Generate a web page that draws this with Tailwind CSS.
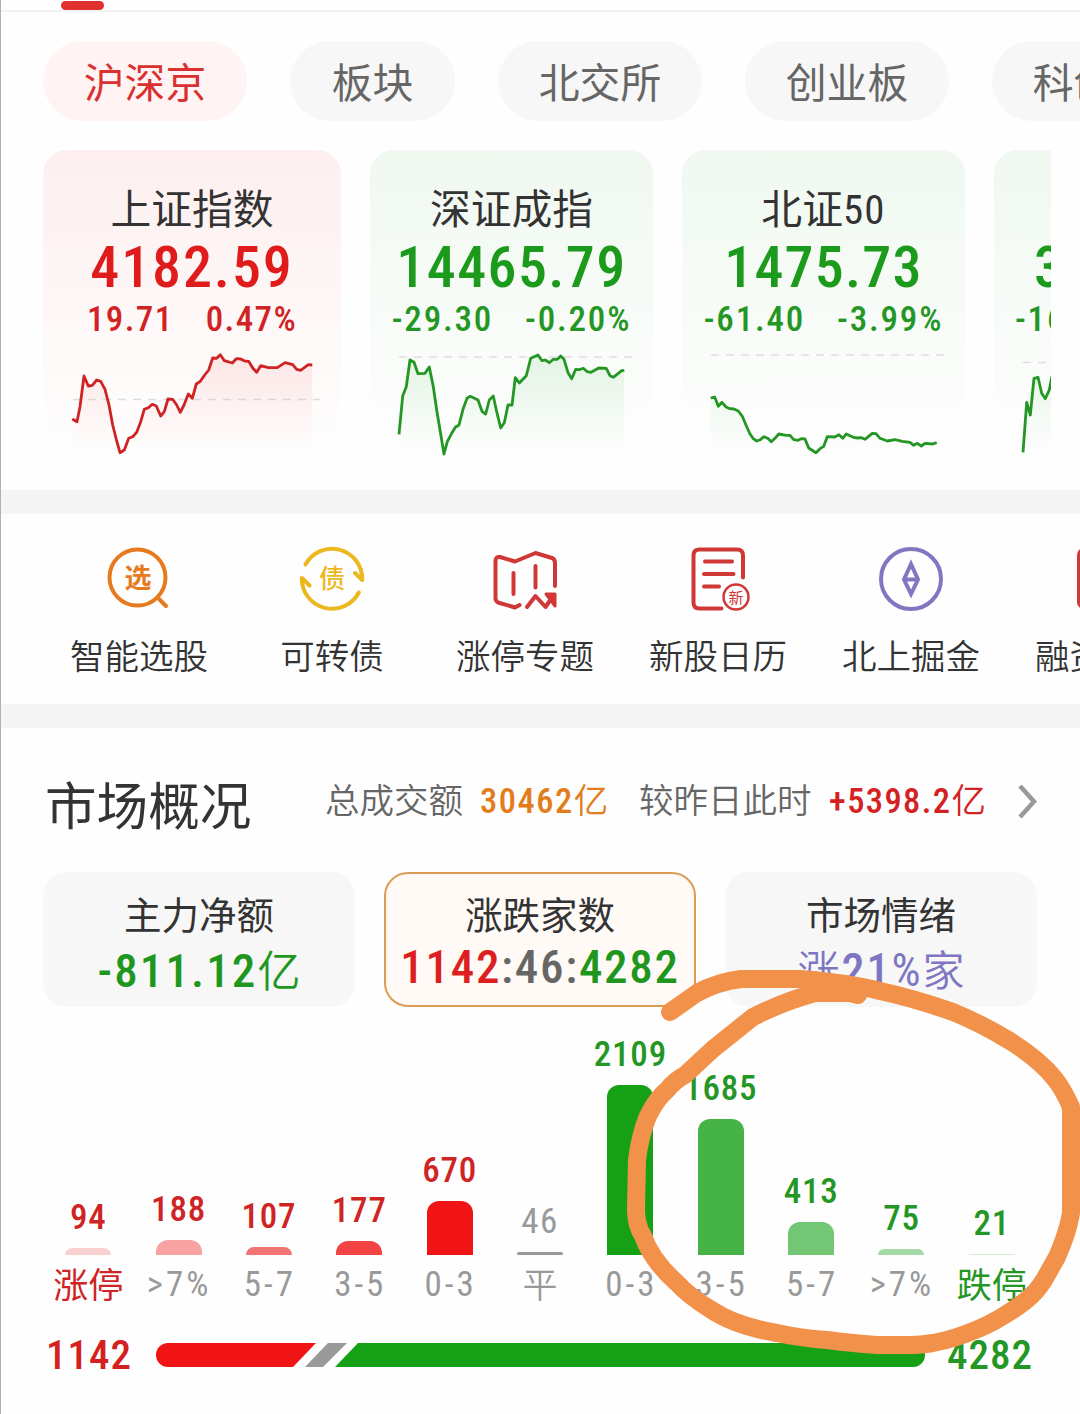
<!DOCTYPE html>
<html lang="zh-CN">
  <head>
    <meta charset="UTF-8" />
    <meta name="viewport" content="width=device-width, initial-scale=1.0" />
    <script src="https://cdn.jsdelivr.net/npm/@tailwindcss/browser@4"></script>
    <title>沪深京行情</title>
  </head>
  <body class="bg-white">
    <div class="relative w-[1080px] h-[1414px] overflow-hidden bg-[#fefefe] font-['Roboto','Noto_Sans_CJK_SC',sans-serif] font-stretch-semi-condensed text-[#333]">
      <!-- Tabs -->
      <div class="h-3 border-b-2 border-[#f2f2f2] pl-[61px] pt-px">
        <div class="w-[43px] h-[9px] rounded-full bg-[#e03131]"></div>
      </div>

      <!-- Market filter -->
      <div class="flex gap-[43px] pl-[43px] pt-[29px] text-[40.8px] leading-[87px] text-[#666] whitespace-nowrap">
        <div class="shrink-0 w-[204px] h-20 rounded-full bg-[#fff4f3] text-center text-[#d93030]">沪深京</div>
        <div class="shrink-0 w-[165px] h-20 rounded-full bg-[#f7f7f7] text-center">板块</div>
        <div class="shrink-0 w-[204px] h-20 rounded-full bg-[#f7f7f7] text-center">北交所</div>
        <div class="shrink-0 w-[204px] h-20 rounded-full bg-[#f7f7f7] text-center">创业板</div>
        <div class="shrink-0 w-[204px] h-20 rounded-full bg-[#f7f7f7] text-center">科创板</div>
      </div>

      <!-- Index cards -->
      <div class="flex gap-[29px] ml-[43px] mt-[29px] w-[1008px] h-[310px] overflow-hidden whitespace-nowrap text-center font-medium">
        <div class="shrink-0 w-[298px]">
          <div class="h-[305px] rounded-t-3xl bg-linear-to-b from-[#fdefef] to-[#fefefe] pt-9">
            <div class="text-[40.8px] leading-[48px] font-normal">上证指数</div>
            <div class="-mt-0.5 text-[58px] leading-[70px] tracking-[1.9px] text-[#e01b1b]">4182.59</div>
            <div class="flex justify-center gap-8 text-[35px] leading-9 tracking-[1.4px] text-[#d02424]"><span>19.71</span><span>0.47%</span></div>
            <svg class="mt-[7px] w-full h-[115px]" viewBox="43 345 298 115" fill="none">
              <defs>
                <linearGradient id="redFill" x1="0" y1="354" x2="0" y2="452" gradientUnits="userSpaceOnUse">
                  <stop stop-color="#f23030" stop-opacity=".1" />
                  <stop offset="1" stop-color="#f23030" stop-opacity="0" />
                </linearGradient>
                <linearGradient id="greenFill" x1="0" y1="354" x2="0" y2="452" gradientUnits="userSpaceOnUse">
                  <stop stop-color="#18a018" stop-opacity=".1" />
                  <stop offset="1" stop-color="#18a018" stop-opacity="0" />
                </linearGradient>
              </defs>
              <path d="M73 399.5H320" stroke="#ddd" stroke-width="1.5" stroke-dasharray="8 7" />
              <path fill="url(#redFill)" d="M72.3 419L77 421.7L80 406.7L84 376L88.3 386L96.7 380L105 389.3L109 405L116.7 441L120 452.7L128.7 438.3L136.7 432.3L144.3 409.3L152.3 404.3L160.7 416L168 399L172.7 399.3L180.3 412.3L188.3 394L192.3 398.3L196.3 384L208.7 370L212.7 358L220.3 354.7L232.3 363L236.3 358.7L248.7 361.3L256.7 372.3L260.7 365.7L277.3 367.7L285 362.7L300.7 370.3L312.3 365V452H72.3Z" />
              <path stroke="#cf2323" stroke-width="2.8" stroke-linejoin="round" d="M72.3 419L77 421.7L80 406.7L84 376L88.3 386L92.3 385.3L96.7 380L100.7 381.3L105 389.3L109 405L112.7 425L116.7 441L120 452.7L124.3 450L128.7 438.3L132.7 436.7L136.7 432.3L140.7 421.7L144.3 409.3L148.3 407.7L152.3 404.3L156.3 406L160.7 416L164.3 411.7L168 399L172.7 399.3L176.7 405L180.3 412.3L184 405L188.3 394L192.3 398.3L196.3 384L200.3 381.3L204.7 375L208.7 370L212.7 358L216.7 358.3L220.3 354.7L224.3 360.7L232.3 363L236.3 358.7L240.7 359L244.7 361L248.7 361.3L252.7 368L256.7 372.3L260.7 365.7L268.3 367.7L277.3 367.7L285 362.7L292.7 364.7L296.7 369.3L300.7 370.3L308.3 364.7L312.3 365" />
            </svg>
          </div>
        </div>

        <div class="shrink-0 w-[283px]">
          <div class="h-[305px] rounded-t-3xl bg-linear-to-b from-[#f0f8f0] to-[#fefefe] pt-9">
            <div class="text-[40.8px] leading-[48px] font-normal">深证成指</div>
            <div class="-mt-0.5 text-[58px] leading-[70px] tracking-[1.4px] text-[#1c9a1c]">14465.79</div>
            <div class="flex justify-center gap-8 text-[35px] leading-9 tracking-[1.8px] text-[#239623]"><span>-29.30</span><span>-0.20%</span></div>
            <svg class="mt-[7px] w-full h-[115px]" viewBox="370 345 283 115" fill="none">
              <path d="M399 357H632" stroke="#ddd" stroke-width="1.5" stroke-dasharray="8 7" />
              <path fill="url(#greenFill)" d="M399 434.3L402.7 396L410 360L418 373.7L425 373.3L429.3 367L433.3 386.7L444 454L451.7 433.3L459 425L467 398.3L478 400L485.7 414L493.3 396L500.7 428L508 405L512 405L515.3 377.7L526.3 375.7L530.7 358.3L538 355L549.3 362.7L560.7 356L571.7 378.7L575.7 369.3L591 372.3L606.3 368.3L613.3 377.3L624.3 370.3V452H399Z" />
              <path stroke="#239623" stroke-width="2.8" stroke-linejoin="round" d="M399 434.3L402.7 396L406.3 386.7L410 360L414 362.3L418 373.7L425 373.3L429.3 367L433.3 386.7L436.7 410L440.3 431.7L444 454L447.3 441.7L451.7 433.3L455.3 427.3L459 425L463 409.3L467 398.3L470.3 396.3L478 400L482 411.3L485.7 414L489.3 400L493.3 396L496.7 411.7L500.7 428L504.3 422.7L508 405L512 405L515.3 377.7L519.3 383L526.3 375.7L530.7 358.3L538 355L542 360.7L545.3 360L549.3 362.7L553.3 359.3L557.3 359.3L560.7 356L564 359.3L568 372.7L571.7 378.7L575.7 369.3L579.3 369.7L583.3 368.3L587.3 371.7L591 372.3L598.7 368L606.3 368.3L610 375.7L613.3 377.3L621.7 370.7L624.3 370.3" />
            </svg>
          </div>
        </div>

        <div class="shrink-0 w-[283px]">
          <div class="h-[305px] rounded-t-3xl bg-linear-to-b from-[#f0f8f0] to-[#fefefe] pt-9">
            <div class="text-[40.8px] leading-[48px] font-normal">北证<span class="tracking-[1.2px]">50</span></div>
            <div class="-mt-0.5 text-[58px] leading-[70px] tracking-[1.2px] text-[#1c9a1c]">1475.73</div>
            <div class="flex justify-center gap-8 text-[35px] leading-9 tracking-[1.8px] text-[#239623]"><span>-61.40</span><span>-3.99%</span></div>
            <svg class="mt-[7px] w-full h-[115px]" viewBox="682 345 283 115" fill="none">
              <path d="M711 355H944" stroke="#ddd" stroke-width="1.5" stroke-dasharray="8 7" />
              <path fill="url(#greenFill)" d="M710.7 398L718.3 406.3L738.3 411L756.7 441L778.7 434L805 439L816 452L827.3 436.7L872.3 433.3L887.3 441L936.7 442.7V452H710.7Z" />
              <path stroke="#239623" stroke-width="2.8" stroke-linejoin="round" d="M710.7 398L714.7 397L718.3 406.3L722 402.3L726 407L730 408.7L734 409L738.3 411L742.3 416.3L746.3 425.7L750 434L753.3 438.7L756.7 441L760.3 439.7L764 436.7L767.7 438.3L771.3 441.7L775 438.3L778.7 434L786.3 435.3L790 435.3L793.7 439.7L798 440.3L801.3 438.7L805 439L808.7 448L816 452.7L820 448.7L823.7 446.3L827.3 436.7L834.7 437L839 434.7L842.7 438.3L846.3 434L853.3 437.3L857.7 438L861.3 437.7L865 439.3L872.3 433.3L876 433.7L880 438.3L887.3 441L895 439.7L902.3 441.3L910 442.3L913.7 445.3L917.3 443.3L921.3 446L925 443.3L932.7 444L936.7 442.7" />
            </svg>
          </div>
        </div>

        <div class="shrink-0 w-[283px] text-left">
          <div class="h-[305px] rounded-t-3xl bg-linear-to-b from-[#f0f8f0] to-[#fefefe] pt-[82px]">
            <div class="pl-10 text-[58px] leading-[70px] text-[#1c9a1c]">3</div>
            <div class="pl-[21px] text-[35px] leading-9 tracking-[1.8px] text-[#239623]">-16</div>
            <svg class="mt-[7px] w-full h-[115px]" viewBox="994 345 283 115" fill="none">
              <path d="M1023 362.5H1060" stroke="#ddd" stroke-width="1.5" stroke-dasharray="8 7" />
              <path fill="url(#greenFill)" d="M1023 452L1026.7 402L1034 378L1038 377L1045 398L1052 377V452Z" />
              <path stroke="#239623" stroke-width="2.8" stroke-linejoin="round" d="M1023 452.3L1026.7 402.3L1030.3 415L1034 378.3L1038 377.3L1041.7 393.3L1045.3 398.7L1049.3 390L1052 376" />
            </svg>
          </div>
        </div>
      </div>

      <div class="mt-[30px] h-6 bg-[#f4f4f4]"></div>

      <!-- Shortcuts -->
      <div class="flex pl-[42.5px] pt-8 h-[190px] text-[34.5px] leading-[44px] text-center whitespace-nowrap font-[350]">
        <div class="shrink-0 w-[193px]">
          <svg class="mx-auto size-[66px]" viewBox="0 0 66 66" fill="none" stroke="#e67a1e" stroke-width="4" stroke-linecap="round">
            <circle cx="31.5" cy="31.5" r="28" />
            <path d="M52 52L60 60" />
            <text x="32" y="41.5" text-anchor="middle" font-size="27" font-weight="700" fill="#e67a1e" stroke="none">选</text>
          </svg>
          <div class="mt-[23px]">智能选股</div>
        </div>
        <div class="shrink-0 w-[193px]">
          <svg class="mx-auto size-[66px]" viewBox="0 0 66 66" fill="none" stroke="#ebb822" stroke-width="4" stroke-linecap="round" stroke-linejoin="round">
            <path d="M6.500 18.500A30.200 30.200 0 0 1 63.200 34L56 27" />
            <path d="M59.800 46.500A30.200 30.200 0 0 1 2.800 32L10.500 39.500" />
            <text x="33" y="42" text-anchor="middle" font-size="26" font-weight="500" fill="#ebb822" stroke="none">债</text>
          </svg>
          <div class="mt-[23px]">可转债</div>
        </div>
        <div class="shrink-0 w-[193px]">
          <svg class="mx-auto size-[66px]" viewBox="0 0 66 66" fill="none" stroke="#d03838" stroke-width="4" stroke-linecap="round" stroke-linejoin="round">
            <path d="M27.500 59L23 61.500L6 56.500Q3.500 55 3.500 52V15Q3.500 10.500 8 11L23 15.500L43.500 7L60 12Q63 13 63 17V40" />
            <path d="M21.500 27V48M43.500 20V41.500" />
            <path d="M35 61L43.500 50L53.500 61L61 50" />
            <path d="M54 48H63V60Z" fill="#e03030" stroke-width="3" />
          </svg>
          <div class="mt-[23px]">涨停专题</div>
        </div>
        <div class="shrink-0 w-[193px]">
          <svg class="mx-auto size-[66px]" viewBox="0 0 66 66" fill="none" stroke="#d03838" stroke-width="4" stroke-linecap="round">
            <path d="M36.500 62.500H14.500Q8.500 62.500 8.500 56.500V9.500Q8.500 3.500 14.500 3.500H52Q58 3.500 58 9.500V31.500" />
            <path d="M20 15.500H47M19 28H48.500M19 40.500H34" />
            <circle cx="51" cy="51" r="12.500" stroke-width="2.500" />
            <text x="51" y="56.500" text-anchor="middle" font-size="15" font-weight="400" fill="#d03838" stroke="none">新</text>
          </svg>
          <div class="mt-[23px]">新股日历</div>
        </div>
        <div class="shrink-0 w-[193px]">
          <svg class="mx-auto size-[66px]" viewBox="0 0 66 66" fill="none" stroke="#7f78c0" stroke-width="4">
            <circle cx="33" cy="33" r="30" />
            <path d="M33 18L40 33.500L33 48L26 33.500ZM26 33.500H40" stroke-width="4" />
          </svg>
          <div class="mt-[23px]">北上掘金</div>
        </div>
        <div class="shrink-0 w-[193px]">
          <svg class="mx-auto size-[66px]" viewBox="0 0 66 66" fill="none" stroke="#d03838" stroke-width="4">
            <rect x="8" y="4" width="50" height="57" rx="5" />
          </svg>
          <div class="mt-[23px]">融资融券</div>
        </div>
      </div>

      <div class="h-6 bg-[#f4f4f4]"></div>

      <!-- Market overview heading -->
      <div class="flex items-center h-[144px] pl-[45px] pt-[3px] text-[34.5px] whitespace-nowrap">
        <h2 class="w-[280px] pt-3 text-[51.6px] leading-[60px]">市场概况</h2>
        <span class="w-[155px] font-[350] text-[#666]">总成交额</span>
        <span class="w-[159px] font-medium tracking-[1.5px] text-[#e27d1c]">30462<span class="font-[350]">亿</span></span>
        <span class="w-[190px] font-[350] text-[#666]">较昨日此时</span>
        <span class="w-[188px] font-medium tracking-[1.4px] text-[#d32222]">+5398.2<span class="font-[350]">亿</span></span>
        <svg class="w-[22px] h-[38px]" viewBox="0 0 22 38" fill="none" stroke="#999" stroke-width="4.500"><path d="M3 3L17 18.500L3 34" /></svg>
      </div>

      <!-- Summary cards -->
      <div class="flex gap-[29px] pl-[43px] text-center whitespace-nowrap">
        <div class="w-[312px] h-[135px] rounded-3xl bg-[#f7f7f7] pt-5">
          <div class="text-[37.5px] leading-[48px]">主力净额</div>
          <div class="mt-[3px] text-[47px] leading-[56px] font-medium tracking-[2.1px] text-[#1f971f]">-811.12<span class="text-[43px] font-[350] tracking-normal">亿</span></div>
        </div>
        <div class="w-[312px] h-[135px] rounded-3xl border-2 border-[#dd9c55] bg-[#fffaf6] pt-[18px]">
          <div class="text-[37.5px] leading-[48px]">涨跌家数</div>
          <div class="-mt-px text-[47px] leading-[56px] font-medium tracking-[1.7px] text-[#666]"><span class="text-[#dd1f1f]">1142</span>:46:<span class="text-[#1f971f]">4282</span></div>
        </div>
        <div class="w-[312px] h-[135px] rounded-3xl bg-[#f7f7f7] pt-5">
          <div class="text-[37.5px] leading-[48px]">市场情绪</div>
          <div class="mt-0.5 text-[46px] leading-[56px] tracking-[2px] text-[#7e76c2]"><span class="text-[42px] font-[350]">涨</span><span class="font-medium">21</span>%<span class="text-[42px] font-[350] tracking-normal">家</span></div>
        </div>
      </div>

      <!-- Distribution of gains and losses -->
      <div class="grid grid-cols-11 items-end ml-[43px] mt-[21px] w-[994px] h-[282px] text-[35px] leading-[36px] text-center whitespace-nowrap">
        <div class="flex flex-col items-center"><span class="font-medium tracking-[0.8px] text-[#cf2424]">94</span><i class="mt-3 w-[46px] h-[7px] rounded-t-[7px] bg-[#f8d0d0]"></i><span class="mt-2.5 pb-0.5 leading-[43px] text-[#cf2424]">涨停</span></div>
        <div class="flex flex-col items-center"><span class="font-medium tracking-[0.8px] text-[#cf2424]">188</span><i class="mt-3 w-[46px] h-[15px] rounded-t-[12px] bg-[#f8a2a2]"></i><span class="mt-2 pb-1 leading-[43px] tracking-[3px] pl-px text-[#999]">&gt;7%</span></div>
        <div class="flex flex-col items-center"><span class="font-medium tracking-[0.8px] text-[#cf2424]">107</span><i class="mt-3 w-[46px] h-2 rounded-t-[8px] bg-[#f27474]"></i><span class="mt-2 pb-1 leading-[43px] tracking-[3px] pl-0.5 text-[#999]">5-7</span></div>
        <div class="flex flex-col items-center"><span class="font-medium tracking-[0.8px] text-[#cf2424]">177</span><i class="mt-3 w-[46px] h-[14px] rounded-t-[12px] bg-[#f24444]"></i><span class="mt-2 pb-1 leading-[43px] tracking-[3px] pl-0.5 text-[#999]">3-5</span></div>
        <div class="flex flex-col items-center"><span class="font-medium tracking-[0.8px] text-[#cf2424]">670</span><i class="mt-3 w-[46px] h-[54px] rounded-t-[12px] bg-[#f01414]"></i><span class="mt-2 pb-1 leading-[43px] tracking-[3px] pl-0.5 text-[#999]">0-3</span></div>
        <div class="flex flex-col items-center"><span class="tracking-[1.5px] text-[#999]">46</span><i class="mt-3 w-[46px] h-[3px] rounded-t-[2px] bg-[#999]"></i><span class="mt-2.5 pb-0.5 leading-[43px] font-[350] text-[#999]">平</span></div>
        <div class="flex flex-col items-center"><span class="font-medium tracking-[0.8px] text-[#239623]">2109</span><i class="mt-3 w-[46px] h-[170px] rounded-t-[12px] bg-[#16a016]"></i><span class="mt-2 pb-1 leading-[43px] tracking-[3px] pl-0.5 text-[#999]">0-3</span></div>
        <div class="flex flex-col items-center"><span class="font-medium tracking-[0.8px] text-[#239623]">1685</span><i class="mt-3 w-[46px] h-[136px] rounded-t-[12px] bg-[#45b345]"></i><span class="mt-2 pb-1 leading-[43px] tracking-[3px] pl-0.5 text-[#999]">3-5</span></div>
        <div class="flex flex-col items-center"><span class="font-medium tracking-[0.8px] text-[#239623]">413</span><i class="mt-3 w-[46px] h-[33px] rounded-t-[12px] bg-[#73c673]"></i><span class="mt-2 pb-1 leading-[43px] tracking-[3px] pl-0.5 text-[#999]">5-7</span></div>
        <div class="flex flex-col items-center"><span class="font-medium tracking-[0.8px] text-[#239623]">75</span><i class="mt-3 w-[46px] h-[6px] rounded-t-[6px] bg-[#a5d9a5]"></i><span class="mt-2 pb-1 leading-[43px] tracking-[3px] pl-px text-[#999]">&gt;7%</span></div>
        <div class="flex flex-col items-center"><span class="font-medium tracking-[0.8px] text-[#239623]">21</span><i class="mt-3 w-[46px] h-px bg-[#d5ecd5]"></i><span class="mt-2.5 pb-0.5 leading-[43px] text-[#239623]">跌停</span></div>
      </div>

      <!-- Up / down ratio -->
      <div class="flex items-center mt-[20px] pl-[46px] text-[41px] leading-[50px] font-medium tracking-[1px]">
        <span class="w-[110px] text-[#d42020]">1142</span>
        <svg class="w-[769px] h-6" viewBox="0 0 769 24">
          <path fill="#f01414" d="M12 0H160L137 24H12A12 12 0 0 1 12 0Z" />
          <path fill="#999" d="M172 0H191L167 24H149Z" />
          <path fill="#16a016" d="M202 0H757A12 12 0 0 1 757 24H179Z" />
        </svg>
        <span class="ml-[22px] text-[#239623]">4282</span>
      </div>

      <!-- Hand-drawn marker circle -->
      <svg class="absolute inset-0 w-[1080px] h-[1414px]" viewBox="0 0 1080 1414" fill="none">
        <path stroke="#f29149" stroke-width="18" stroke-linecap="round" stroke-linejoin="round" d="M670 1012L697 993Q717 982 741 979H800Q850 983 880 991Q913 998 953 1012Q980 1023 1010 1041Q1040 1060 1055 1079Q1063 1089 1071 1107V1213Q1068 1232 1057 1257L1044 1280Q1036 1293 1024 1302Q1000 1320 978 1329Q955 1339 933 1343Q920 1345 910 1345H877Q850 1343 827 1340Q800 1338 777 1333Q735 1326 710 1309Q690 1297 677 1283Q652 1261 643 1236Q636 1225 636 1210L637 1160Q640 1135 648 1116Q657 1098 667 1090Q675 1080 685 1075L713 1049L753 1017Q785 1001 815 993H850L858 995" />
      </svg>

      <div class="absolute left-0 top-0 w-px h-full bg-[#b0b0b0]"></div>
    </div>
  </body>
</html>
